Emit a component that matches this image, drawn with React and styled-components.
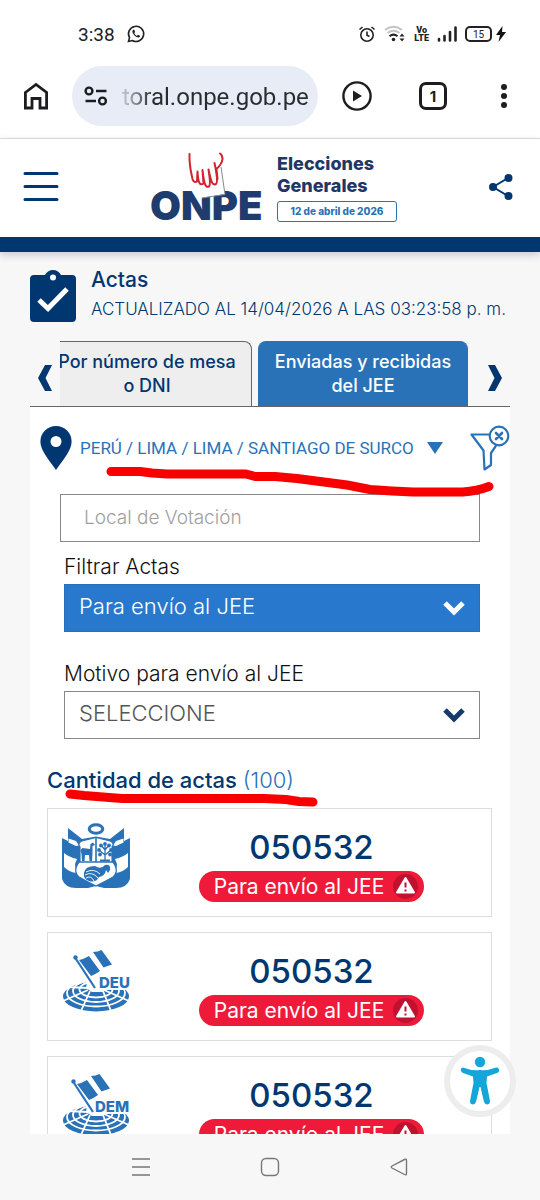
import React from "react";
import styled, { createGlobalStyle, css } from "styled-components";

const navy = "#003770";
const blue = "#2a72b8";
const red = "#ef1a3a";

export default function App() {
	return (
		<Screen>
			<GlobalStyle />
			<StatusBar />
			<BrowserBar />
			<SiteHeader />
			<Content>
				<PageTitle />
				<TabBar />
				<Panel>
					<Filters />
					<ActaList />
				</Panel>
			</Content>
			<Accessibility aria-label="Accesibilidad">
				<svg width="40" height="50" viewBox="0 0 40 50" fill="#14a5d9">
					<circle cx="20" cy="6" r="5.2" />
					<path d="M3 11.5 Q0 12 1 15 Q1.500 16.500 3 17 L13 20.500 L13.500 27 L10 45 Q10 48 12.500 48.500 Q15 48.500 16 46 L19.500 31 H20.500 L24 46 Q25 48.500 27.500 48.500 Q30 48 30 45 L26.500 27 L27 20.500 L37 17 Q39.500 16 39 13.500 Q38.500 11 36 11.500 Q27 15 20 14 Q12 15 3 11.500Z" />
				</svg>
			</Accessibility>
			<SystemNav />
		</Screen>
	);
}

function StatusBar() {
	return (
		<StatusRow>
			<Clock>3:38</Clock>
			<svg width="18" height="18" viewBox="0 0 18 18" fill="none" stroke="#222">
				<path d="M1.500 16.500 L2.500 12.700 A7.600 7.600 0 1 1 5.300 15.500Z" strokeWidth="1.600" />
				<path d="M6.100 4.700 C4.800 5.500 5.100 8 7.300 10.300 C9.700 12.900 12.300 13.100 13 11.600 L13 10.800 L10.900 9.800 L9.900 10.900 Q8 10 7.200 8.100 L8.100 7.100 L7.200 4.800Z" fill="#222" stroke="none" />
			</svg>
			<Spacer />
			<svg width="18" height="18" viewBox="0 0 18 18" fill="none" stroke="#222" strokeWidth="1.600">
				<circle cx="9" cy="10" r="6.200" />
				<path d="M9 6.500 V10.200 L11.500 11.500 M1.500 4.500 L4.500 2 M13.500 2 L16.500 4.500" />
			</svg>
			<svg width="22" height="18" viewBox="0 0 22 18" fill="none" strokeWidth="2">
				<path d="M1 5 Q9.500 -1.500 18 5" stroke="#c4c4c4" />
				<path d="M3.500 8 Q9.500 3.500 15.500 8" stroke="#c4c4c4" />
				<path d="M5.500 11.300 Q9.500 8 13.500 11.300" stroke="#222" />
				<circle cx="9.500" cy="14.500" r="1.800" fill="#222" />
				<path d="M15.500 11.500 L18 8.500 L20.500 11.500Z M15.500 13.500 L18 16.500 L20.500 13.500Z" fill="#222" />
			</svg>
			<Volte>
				<span>Vo</span>
				<span>LTE</span>
			</Volte>
			<svg width="20" height="18" viewBox="0 0 20 18" stroke="#222" strokeWidth="2.600" strokeLinecap="round">
				<path d="M2 14 V15.500 M7.500 11 V15.500 M13 7 V15.500 M18.500 2.500 V15.500" />
			</svg>
			<Battery>15</Battery>
			<Bolt width="10" height="16" viewBox="0 0 10 16" fill="#111">
				<path d="M6.500 0 L0 9 H4 L2.500 16 L10 6 H6Z" />
			</Bolt>
		</StatusRow>
	);
}

function BrowserBar() {
	return (
		<BrowserRow>
			<IconButton aria-label="Inicio">
				<svg width="26" height="28" viewBox="0 0 26 28" fill="none" stroke="#1d1d1f" strokeWidth="2.800">
					<path d="M2.400 10.500 L13 2.400 L23.600 10.500 V26 H17 V16.500 H9 V26 H2.400Z" />
				</svg>
			</IconButton>
			<AddressBar>
				<svg width="24" height="20" viewBox="0 0 24 20" fill="none" stroke="#1d1d1f" strokeWidth="2.400">
					<circle cx="5" cy="5" r="3.400" />
					<path d="M12 5 H22.500 M1.500 15 H12" />
					<circle cx="18.500" cy="15" r="3.400" />
				</svg>
				<UrlInput aria-label="Dirección" readOnly defaultValue="toral.onpe.gob.pe" />
			</AddressBar>
			<BrowserTools>
				<IconButton aria-label="Reproducir">
					<svg width="32" height="32" viewBox="0 0 32 32" fill="none" stroke="#1d1d1f" strokeWidth="2.400">
						<circle cx="16" cy="16" r="13.600" />
						<path d="M12 10.500 V21.500 L21 16Z" fill="#1d1d1f" stroke="none" />
					</svg>
				</IconButton>
				<TabCount aria-label="Pestañas">1</TabCount>
				<IconButton aria-label="Más opciones">
					<svg width="22" height="26" viewBox="0 0 22 26" fill="#1d1d1f">
						<circle cx="11" cy="4" r="3" />
						<circle cx="11" cy="13" r="3" />
						<circle cx="11" cy="22" r="3" />
					</svg>
				</IconButton>
			</BrowserTools>
		</BrowserRow>
	);
}

function SiteHeader() {
	return (
		<Header>
			<IconButton aria-label="Menú">
				<svg width="36" height="32" viewBox="0 0 36 32" stroke={navy} strokeWidth="3" strokeLinecap="round">
					<path d="M2 2.500 H34 M2 15.500 H34 M2 28.500 H34" />
				</svg>
			</IconButton>
			<Brand>
				<svg width="112" height="70" viewBox="0 0 112 70" role="img" aria-label="ONPE">
					<LogoText x="-1" y="68">ONPE</LogoText>
					<path d="M46 37 L50 46 L74 42 L70 15 L48 26Z" fill="#fff" />
					<path d="M51 46 L74 42.500 L70 15" fill="none" stroke="#888" strokeWidth="1" />
					<path
						d="M38.500 2 C38 13 40 20 41.500 27 Q42.500 31 46 29.500 L46.500 19.500 C47 31 49 34 52.500 31.500 L51.500 18 C53 31 54 36 58 34.500 Q60 33 57.500 17.500 C60 29 61 34 65 32 Q67.500 30 63.500 11 M66.500 27 L65.500 17 Q71 12 71.500 7 Q71.500 3 69 1.500"
						fill="none"
						stroke="#d2232f"
						strokeWidth="2"
						strokeLinecap="round"
						strokeLinejoin="round"
					/>
				</svg>
				<BrandInfo>
					<BrandTitle>Elecciones<br />Generales</BrandTitle>
					<BrandDate>12 de abril de 2026</BrandDate>
				</BrandInfo>
			</Brand>
			<IconButton aria-label="Compartir">
				<svg width="24" height="26" viewBox="0 0 24 26" fill={navy} stroke={navy} strokeWidth="2">
					<path d="M19 4 L4 13 L19 22" fill="none" />
					<circle cx="19.500" cy="4" r="3" />
					<circle cx="4" cy="13" r="3" />
					<circle cx="19.500" cy="22" r="3" />
				</svg>
			</IconButton>
		</Header>
	);
}

function PageTitle() {
	return (
		<TitleRow>
			<svg width="46" height="52" viewBox="0 0 46 52">
				<path d="M4 5 H15 Q18 0 23 0 Q28 0 31 5 H42 Q46 5 46 9 V48 Q46 52 42 52 H4 Q0 52 0 48 V9 Q0 5 4 5Z" fill={navy} />
				<circle cx="23" cy="7.500" r="3" fill="#fff" />
				<path d="M9 30 L18 38.500 L37 19" fill="none" stroke="#fff" strokeWidth="5" />
			</svg>
			<TitleText>
				<Title>Actas</Title>
				<Updated>ACTUALIZADO AL 14/04/2026 A LAS 03:23:58 p. m.</Updated>
			</TitleText>
		</TitleRow>
	);
}

function TabBar() {
	return (
		<TabsRow>
			<Arrow aria-label="Anterior">
				<svg width="14" height="26" viewBox="0 0 14 26" fill={navy}>
					<path d="M7 0 H14 L7.500 13 L14 26 H7 L0 13Z" />
				</svg>
			</Arrow>
			<TabStrip role="tablist">
				<Tab role="tab">Por número de mesa<br />o DNI</Tab>
				<Tab role="tab" aria-selected $active>Enviadas y recibidas<br />del JEE</Tab>
			</TabStrip>
			<Arrow aria-label="Siguiente">
				<svg width="14" height="26" viewBox="0 0 14 26" fill={navy}>
					<path d="M7 0 H0 L6.500 13 L0 26 H7 L14 13Z" />
				</svg>
			</Arrow>
		</TabsRow>
	);
}

function Filters() {
	return (
		<>
			<Location>
				<svg width="32" height="44" viewBox="0 0 32 44" fill={navy}>
					<path d="M16 0 A15.600 15.600 0 0 1 31.600 15.600 C31.600 24 24 33 16 44 C8 33 0.400 24 0.400 15.600 A15.600 15.600 0 0 1 16 0Z M16 10 A5.500 5.500 0 1 0 16 21 A5.500 5.500 0 1 0 16 10Z" fillRule="evenodd" />
				</svg>
				<PlaceButton>
					PERÚ / LIMA / LIMA / SANTIAGO DE SURCO
					<svg width="16" height="12" viewBox="0 0 16 12" fill={blue}>
						<path d="M0 0 H16 L8 12Z" />
					</svg>
				</PlaceButton>
				<IconButton aria-label="Limpiar filtros">
					<svg width="40" height="46" viewBox="0 0 40 46" fill="none" stroke={blue} strokeWidth="2.200" strokeLinejoin="round" strokeLinecap="round">
						<path d="M19 9.500 H1.500 L13.500 25.500 L14.500 44.500 L21 40 V28 L25.500 21.500" />
						<circle cx="29" cy="11" r="9.300" />
						<path d="M26 8 L32 14 M32 8 L26 14" strokeWidth="2.600" />
					</svg>
				</IconButton>
				<LocationMark viewBox="0 0 388 28">
					<path d="M4 5.500 H33 L45 7 L60 8 H139 L148 10.500 H168 L190 12.500 L240 19 L263 23.500 L285 25 L306 26 H356 Q370 25 382 20.500" />
				</LocationMark>
			</Location>
			<PlaceInput aria-label="Local de Votación" placeholder="Local de Votación" />
			<Field>
				<Label htmlFor="filtro">Filtrar Actas</Label>
				<SelectBox $filled>
					<Select id="filtro"><option>Para envío al JEE</option></Select>
					<Chevron color="#fff" />
				</SelectBox>
			</Field>
			<Field>
				<Label htmlFor="motivo">Motivo para envío al JEE</Label>
				<SelectBox>
					<Select id="motivo"><option>SELECCIONE</option></Select>
					<Chevron color="#173a6c" />
				</SelectBox>
			</Field>
		</>
	);
}

function Chevron({ color }) {
	return (
		<SelectIcon width="22" height="16" viewBox="0 0 22 16" fill="none" stroke={color} strokeWidth="5">
			<path d="M2 3 L11 12 L20 3" />
		</SelectIcon>
	);
}

const actas = [
	{ numero: "050532", logo: <PeruShield /> },
	{ numero: "050532", logo: <GlobeFlag label="DEU" labelX={37} flagX={0} /> },
	{ numero: "050532", logo: <GlobeFlag label="DEM" labelX={33} flagX={-2} /> },
];

function ActaList() {
	return (
		<List>
			<Count>
				Cantidad de actas <span>(100)</span>
				<CountMark viewBox="0 0 254 18">
					<path d="M6 5 L20 6.500 L58 9.500 H200 L222 10.500 L235 12.500 L249 13" />
				</CountMark>
			</Count>
			{actas.map((acta, i) => (
				<Card key={i}>
					<LogoBox>{acta.logo}</LogoBox>
					<CardInfo>
						<Numero>{acta.numero}</Numero>
						<Badge>
							Para envío al JEE
							<svg width="25" height="25" viewBox="0 0 25 25">
								<circle cx="12.500" cy="12.500" r="12.500" fill="#c0112f" />
								<path d="M12.500 4 L21 18.500 H4Z" fill="#fff" stroke="#fff" strokeWidth="2" strokeLinejoin="round" />
								<path d="M12.500 8.500 V13.500 M12.500 15.500 V17.500" stroke="#c0112f" strokeWidth="2" />
							</svg>
						</Badge>
					</CardInfo>
				</Card>
			))}
		</List>
	);
}

function PeruShield() {
	return (
		<svg width="70" height="66" viewBox="0 0 70 66">
			<ellipse cx="34" cy="6" rx="6.800" ry="4.200" fill="none" stroke={blue} strokeWidth="3" />
			<path d="M6 5 L20 16 L34 13.500 L48 16 L62 5 V18 L68 15 V56 Q65 65 54 65 H42 L34 63 L26 65 H14 Q3 65 0 56 V15 L6 18Z" fill={blue} />
			<path d="M6.500 15.500 L14 18 L17 22.500 L14 23 L6.500 19.500Z M61.500 15.500 L54 18 L51 22.500 L54 23 L61.500 19.500Z" fill="#fff" />
			<path d="M2 30 Q7 34 15 36 L13 41 L14 50 Q7 49 2 44Z M66 30 Q61 34 53 36 L55 41 L54 50 Q61 49 66 44Z" fill="#fff" />
			<path d="M18 24 Q15 20 20 18 L34 14.500 L48 18 Q53 20 50 24 V38 Q58 48 51 54 Q44 58 34 63 Q24 58 17 54 Q10 48 18 38Z" fill="#fff" stroke={blue} strokeWidth="1.200" />
			<path d="M34 15 V39 M17 39 H51" stroke={blue} strokeWidth="1.600" />
			<path d="M18.500 27 L20.500 25 L28 26 L28.500 21 L31 19.500 L33 22 L30.500 23 L30.500 30 L30 38 H27.500 L27 32 H23 L22.500 38 H20 L19.500 31Z" fill={blue} />
			<path d="M43 38 V23 M43 32 L37 27 M43 32 L49 27 M43 27 L39 22 M43 27 L47 22" stroke={blue} strokeWidth="1.300" />
			<g fill={blue}>
				<circle cx="43" cy="21" r="1.900" /><circle cx="39" cy="22.500" r="1.900" /><circle cx="47" cy="22.500" r="1.900" />
				<circle cx="37" cy="27" r="1.900" /><circle cx="49" cy="27" r="1.900" /><circle cx="38" cy="31.500" r="1.900" />
				<circle cx="48" cy="31.500" r="1.900" /><path d="M38 36.500 H48 V38.500 H38Z" />
			</g>
			<path d="M22 50 Q23 43 33 43 Q39 47 43 42 Q49 41 48 47 L46 50 L44 47 Q43 53 37 54 Q34 60 27 58 Q21 56 22 50Z" fill={blue} />
			<path d="M24 49 Q32 45 38 51 M23 52 Q30 48 36 55 M24 55 Q29 52 32 58" fill="none" stroke="#fff" strokeWidth="0.900" />
		</svg>
	);
}

function GlobeFlag({ label, labelX, flagX }) {
	return (
		<svg width="70" height="66" viewBox="0 0 70 66">
			<ellipse cx="34" cy="49.500" rx="33" ry="15" fill={blue} />
			<g fill="none" stroke="#fff" strokeWidth="1.800">
				<ellipse cx="34" cy="46" rx="29" ry="13.500" />
				<ellipse cx="34" cy="44" rx="23" ry="11" />
				<ellipse cx="34" cy="42.500" rx="16.500" ry="8" />
				<path d="M28 44 L19 64 M41 44 L49 64 M26 43 L1 54 M42 43 L67 54 M26 41 L5 40" />
			</g>
			<path d="M26 28 H70 V43 H44 L40 45 H30 L24 41Z" fill="#fff" />
			<g transform={`translate(${flagX} 0)`}>
				<path d="M14 12 L33 41" stroke={blue} strokeWidth="2.200" />
				<circle cx="13.500" cy="10.500" r="2.200" fill={blue} />
				<path d="M17 13 Q22 12 27 9 L38 24 Q34 27 29 29Z M31 5 Q36 5 39.500 3 L50 17.500 L41.500 20.500Z" fill={blue} />
			</g>
			<GlobeText x={labelX} y="41">{label}</GlobeText>
		</svg>
	);
}

function SystemNav() {
	return (
		<NavRow>
			<IconButton aria-label="Recientes">
				<svg width="20" height="20" viewBox="0 0 20 20" stroke="#777" strokeWidth="1.400">
					<path d="M1 2 H19 M1 10 H19 M1 18 H19" />
				</svg>
			</IconButton>
			<IconButton aria-label="Inicio del sistema">
				<svg width="20" height="20" viewBox="0 0 20 20" fill="none" stroke="#777" strokeWidth="1.400">
					<rect x="1.500" y="1.500" width="17" height="17" rx="4.500" />
				</svg>
			</IconButton>
			<IconButton aria-label="Atrás">
				<svg width="20" height="20" viewBox="0 0 20 20" fill="none" stroke="#777" strokeWidth="1.400" strokeLinejoin="round">
					<path d="M17.500 3.500 Q17.500 1.500 15.500 2.500 L3 9 Q1.500 10 3 11 L15.500 17.500 Q17.500 18.500 17.500 16.500Z" />
				</svg>
			</IconButton>
		</NavRow>
	);
}

const GlobalStyle = createGlobalStyle`
	* {
		box-sizing: border-box;
	}
	body {
		margin: 0;
		background: #f7f7f7;
		font-family: Inter, "Open Sans", sans-serif;
	}
	svg {
		display: block;
		flex: none;
		overflow: visible;
	}
	button, input, select {
		font-family: inherit;
	}
`

const Screen = styled.div`
	position: relative;
	height: 100vh;
	display: flex;
	flex-direction: column;
	overflow: hidden;
`

const Spacer = styled.div`
	flex: 1;
`

const StatusRow = styled.div`
	flex: none;
	display: flex;
	align-items: center;
	gap: 8px;
	padding: 12px 34px 10px 78px;
	height: 66px;
	background: #fff;
`

const Clock = styled.span`
	font-family: Roboto, sans-serif;
	font-size: 19px;
	margin-right: 4px;
	color: #222;
`

const Volte = styled.span`
	display: flex;
	flex-direction: column;
	align-items: center;
	font-family: Roboto, sans-serif;
	font-size: 9px;
	font-weight: 900;
	line-height: 8px;
	color: #222;
`

const Battery = styled.span`
	display: flex;
	align-items: center;
	justify-content: center;
	width: 27px;
	height: 16px;
	border: 2px solid #222;
	border-radius: 5px;
	font-family: Roboto, sans-serif;
	font-size: 10px;
	color: #222;
`

const Bolt = styled.svg`
	margin-left: -4px;
`

const BrowserRow = styled.div`
	flex: none;
	display: flex;
	align-items: center;
	padding: 0 25px 12px 23px;
	background: #fff;
	border-bottom: 1px solid #dcdfe4;
`

const IconButton = styled.button`
	padding: 0;
	border: 0;
	background: none;
	cursor: pointer;
`

const AddressBar = styled.div`
	display: flex;
	align-items: center;
	flex: 1;
	gap: 14px;
	height: 60px;
	margin-left: 23px;
	padding: 0 8px 0 12px;
	border-radius: 30px;
	background: #e8ecf6;
`

const UrlInput = styled.input`
	flex: 1;
	min-width: 0;
	width: 100%;
	padding: 2px 0 0;
	border: 0;
	outline: none;
	font-family: Roboto, sans-serif;
	font-size: 24px;
	background: linear-gradient(90deg, #b8bbc4 2%, #2a2b2f 16%);
	-webkit-background-clip: text;
	-webkit-text-fill-color: transparent;
`

const BrowserTools = styled.div`
	display: flex;
	align-items: center;
	justify-content: space-between;
	flex: none;
	width: 174px;
	margin-left: 23px;
`

const TabCount = styled.button`
	width: 28px;
	height: 28px;
	padding: 0;
	border: 3px solid #1d1d1f;
	border-radius: 7px;
	background: none;
	font-size: 15px;
	font-weight: 700;
	color: #1d1d1f;
`

const Header = styled.header`
	flex: none;
	display: flex;
	align-items: center;
	justify-content: space-between;
	height: 113px;
	padding: 0 27px 2px 23px;
	background: #fff;
	border-bottom: 15px solid ${navy};
	box-shadow: 0 3px 8px rgba(0, 20, 80, 0.2);
	z-index: 1;
`

const Brand = styled.div`
	display: flex;
	align-items: center;
	gap: 14px;
`

const LogoText = styled.text`
	font-size: 40px;
	font-weight: 900;
	fill: #1f3c6e;
`

const BrandInfo = styled.div`
	color: #1f3764;
`

const BrandTitle = styled.div`
	font-size: 18px;
	font-weight: 800;
	line-height: 22px;
`

const BrandDate = styled.div`
	width: 120px;
	margin-top: 4px;
	border: 1px solid ${blue};
	border-radius: 3px;
	font-size: 10px;
	font-weight: 800;
	line-height: 19px;
	text-align: center;
	color: ${blue};
`

const Content = styled.main`
	flex: 1;
	min-height: 0;
	display: flex;
	flex-direction: column;
	overflow: hidden;
	padding: 14px 30px 0;
`

const TitleRow = styled.div`
	flex: none;
	display: flex;
	align-items: center;
	gap: 15px;
	height: 60px;
	white-space: nowrap;
	color: ${navy};
`

const TitleText = styled.div`
	padding-bottom: 4px;
`

const Title = styled.h1`
	margin: 0;
	font-size: 21px;
	font-weight: 500;
	line-height: 30px;
`

const Updated = styled.div`
	font-size: 17px;
	font-weight: 300;
	line-height: 28px;
`

const TabsRow = styled.div`
	flex: none;
	display: flex;
	height: 66px;
	margin-top: 15px;
	border-bottom: 1px solid #666;
`

const Arrow = styled(IconButton)`
	display: flex;
	align-items: center;
	justify-content: center;
	width: 30px;
	padding-top: 8px;
`

const TabStrip = styled.div`
	flex: 1;
	display: flex;
	justify-content: flex-end;
	gap: 6px;
	padding-right: 12px;
	overflow: hidden;
`

const Tab = styled.button`
	flex: none;
	width: 210px;
	padding: 0;
	border: 1px solid #666;
	border-bottom: 0;
	border-radius: 8px 8px 0 0;
	background: #eee;
	font-size: 18px;
	font-weight: 500;
	line-height: 24px;
	white-space: nowrap;
	color: ${navy};
	${({ $active }) => $active && css`
		border-color: ${blue};
		background: ${blue};
		color: #fff;
	`}
`

const Panel = styled.section`
	flex: 1;
	min-height: 0;
	background: #fff;
`

const Location = styled.div`
	position: relative;
	display: flex;
	align-items: center;
	height: 87px;
	padding: 0 0 6px 10px;
`

const PlaceButton = styled.button`
	display: flex;
	align-items: center;
	gap: 13px;
	margin-right: auto;
	padding: 0 0 0 8px;
	border: 0;
	background: none;
	font-family: Roboto, sans-serif;
	font-size: 17px;
	white-space: nowrap;
	color: ${blue};
`

const Mark = styled.svg`
	position: absolute;
	fill: none;
	stroke: #f80000;
	stroke-width: 9px;
	stroke-linecap: round;
	stroke-linejoin: round;
	pointer-events: none;
`

const LocationMark = styled(Mark)`
	left: 77px;
	top: 59px;
	width: 388px;
`

const PlaceInput = styled.input`
	display: block;
	width: calc(100% - 60px);
	height: 48px;
	margin: 0 30px;
	padding: 0 23px 2px;
	border: 1px solid #888;
	border-radius: 0;
	background: #fff;
	font-size: 19px;
	font-weight: 300;
	&::placeholder {
		color: #a0a0a0;
	}
`

const Field = styled.div`
	display: flex;
	flex-direction: column;
	gap: 4px;
	margin: 12px 30px 0 34px;
	& + & {
		margin-top: 29px;
	}
`

const Label = styled.label`
	font-size: 21px;
	font-weight: 300;
	line-height: 26px;
	color: #111;
`

const SelectBox = styled.div`
	position: relative;
	display: flex;
	height: 48px;
	border: 1px solid ${({ $filled }) => $filled ? '#2a6db8' : '#888'};
	background: ${({ $filled }) => $filled ? '#2878ce' : '#fff'};
	color: ${({ $filled }) => $filled ? '#fff' : '#555'};
`

const Select = styled.select`
	flex: 1;
	padding: 0 48px 4px 14px;
	border: 0;
	outline: none;
	appearance: none;
	background: none;
	font-size: 22px;
	font-weight: 300;
	color: inherit;
`

const SelectIcon = styled.svg`
	position: absolute;
	right: 14px;
	top: 15px;
	pointer-events: none;
`

const List = styled.div`
	display: flex;
	flex-direction: column;
	gap: 15px;
	padding: 28px 18px 0 17px;
`

const Count = styled.h2`
	position: relative;
	margin: 0;
	font-size: 22px;
	font-weight: 500;
	line-height: 26px;
	color: ${navy};
	span {
		font-weight: 300;
		color: ${blue};
	}
`

const CountMark = styled(Mark)`
	left: 17px;
	top: 22px;
	width: 254px;
`

const Card = styled.article`
	display: flex;
	height: 109px;
	border: 1px solid #ddd;
	background: #fff;
`

const LogoBox = styled.div`
	padding: 14px 0 0 14px;
`

const CardInfo = styled.div`
	flex: 1;
	display: flex;
	flex-direction: column;
	align-items: center;
	padding: 14px 0 0 0;
`

const Numero = styled.div`
	font-size: 33px;
	font-weight: 500;
	line-height: 48px;
	color: ${navy};
`

const Badge = styled.div`
	display: flex;
	align-items: center;
	gap: 9px;
	height: 31px;
	padding: 0 6px 0 15px;
	border-radius: 16px;
	background: ${red};
	font-size: 21px;
	white-space: nowrap;
	color: #fff;
`

const GlobeText = styled.text`
	font-size: 15px;
	font-weight: 800;
	fill: ${blue};
`

const Accessibility = styled.button`
	position: absolute;
	right: 24px;
	bottom: 83px;
	z-index: 2;
	display: flex;
	align-items: center;
	justify-content: center;
	width: 72px;
	height: 72px;
	padding: 0;
	border: 6px solid #ededed;
	border-radius: 50%;
	background: #fff;
`

const NavRow = styled.nav`
	flex: none;
	display: flex;
	align-items: center;
	justify-content: space-between;
	height: 66px;
	padding: 0 131px;
	background: #f7f7f7;
`
